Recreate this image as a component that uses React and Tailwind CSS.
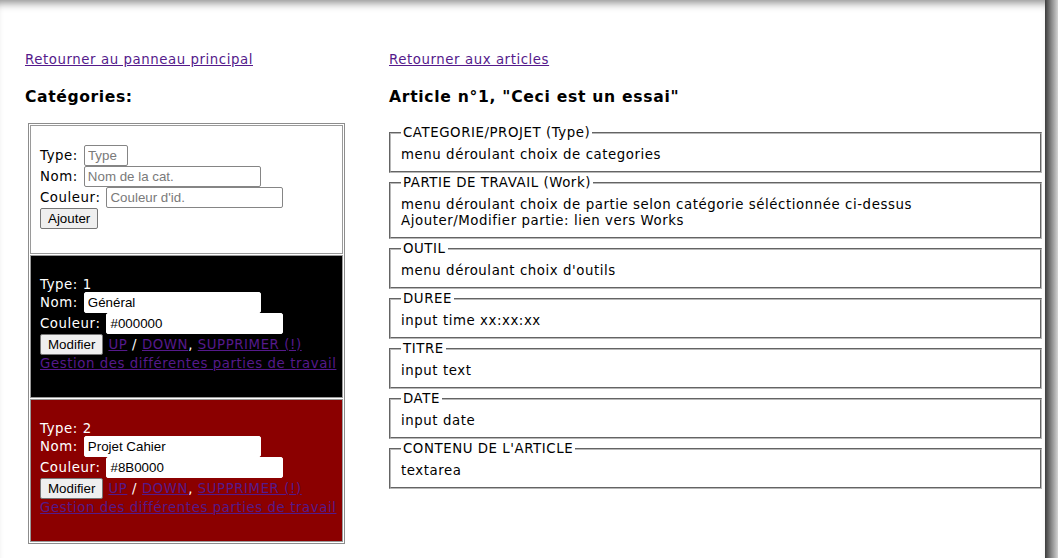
import React from 'react'

const verdana = "font-['DejaVu_Sans',Verdana,sans-serif]"
const arial = "font-['Liberation_Sans',Arial,sans-serif]"

const TextInput = ({ value, placeholder, width = 'w-[177px]', dark = false }) => (
  <input
    type="text"
    defaultValue={value}
    placeholder={placeholder}
    className={`${arial} ${width} h-[21px] px-[3px] text-[13.33px] tracking-normal text-black bg-white border ${dark ? 'border-white' : 'border-[#858585]'} rounded-[2px] placeholder:text-[#7a7a7a] outline-none`}
  />
)

const Button = ({ children }) => (
  <button className={`${arial} h-[21px] px-[7px] text-[13.33px] tracking-normal text-black bg-[#efefef] border border-[#767676] rounded-[2px]`}>
    {children}
  </button>
)

const Link = ({ children }) => (
  <a href="#" className="text-[#551a8b] underline">
    {children}
  </a>
)

const CategoryCell = ({ type, name, color, bg }) => (
  <div className={`border border-[#9a9a9a] ${bg} text-white px-[9px] pt-[21px] pb-[25px]`}>
    <div className="leading-[15px]">Type: {type}</div>
    <div className="flex items-center h-[21px]">
      <span>Nom:</span>
      <span className="ml-[6px]"><TextInput value={name} dark /></span>
    </div>
    <div className="flex items-center h-[21px]">
      <span>Couleur:</span>
      <span className="ml-[6px]"><TextInput value={color} dark /></span>
    </div>
    <div className="flex items-center h-[21px] whitespace-nowrap">
      <Button>Modifier</Button>
      <span className="ml-[5px]">
        <Link>UP</Link> / <Link>DOWN</Link>, <Link>SUPPRIMER (!)</Link>
      </span>
    </div>
    <div className="leading-[17px] whitespace-nowrap">
      <Link>Gestion des différentes parties de travail</Link>
    </div>
  </div>
)

const Field = ({ legend, children }) => (
  <fieldset className="border-2 [border-style:groove] border-[#b8b8b8] px-[10px] pt-[6px] pb-[8px] mb-[2px]">
    <legend className="px-[2px] leading-[16px]">{legend}</legend>
    <div className="leading-[16px]">{children}</div>
  </fieldset>
)

export default function App() {
  return (
    <div className={`${verdana} w-[1058px] h-[558px] flex overflow-hidden bg-white text-[13.33px] tracking-[0.56px] text-black`}>
      <div className="flex-1 flex pl-[25px] pt-[52px] pr-[3px] shadow-[inset_0_9px_8px_-6px_rgba(0,0,0,0.45)]">
        {/* colonne gauche */}
        <div className="w-[364px]">
          <div className="leading-[16px]">
            <Link>Retourner au panneau principal</Link>
          </div>
          <h3 className="font-bold text-[15.6px] tracking-[0.6px] leading-[18px] mt-[20px]">Catégories:</h3>
          <div className="ml-[3px] mt-[17px] w-[317px] border border-[#8c8c8c] p-px flex flex-col gap-px">
            <div className="border border-[#9a9a9a] bg-white px-[9px] pt-[19px] pb-[24px]">
              <div className="flex items-center h-[21px]">
                <span>Type:</span>
                <span className="ml-[6px]"><TextInput placeholder="Type" width="w-[44px]" /></span>
              </div>
              <div className="flex items-center h-[21px]">
                <span>Nom:</span>
                <span className="ml-[6px]"><TextInput placeholder="Nom de la cat." /></span>
              </div>
              <div className="flex items-center h-[21px]">
                <span>Couleur:</span>
                <span className="ml-[6px]"><TextInput placeholder="Couleur d'id." /></span>
              </div>
              <div className="flex items-center h-[21px]">
                <Button>Ajouter</Button>
              </div>
            </div>
            <CategoryCell type="1" name="Général" color="#000000" bg="bg-black" />
            <CategoryCell type="2" name="Projet Cahier" color="#8B0000" bg="bg-[#8b0000]" />
          </div>
        </div>

        {/* colonne droite */}
        <div className="flex-1">
          <div className="leading-[16px]">
            <Link>Retourner aux articles</Link>
          </div>
          <h3 className="font-bold text-[15.6px] tracking-[0.7px] leading-[18px] mt-[20px]">Article n°1, "Ceci est un essai"</h3>
          <div className="mt-[19px]">
            <Field legend="CATEGORIE/PROJET (Type)">menu déroulant choix de categories</Field>
            <Field legend="PARTIE DE TRAVAIL (Work)">
              menu déroulant choix de partie selon catégorie séléctionnée ci-dessus
              <br />
              Ajouter/Modifier partie: lien vers Works
            </Field>
            <Field legend="OUTIL">menu déroulant choix d'outils</Field>
            <Field legend="DUREE">input time xx:xx:xx</Field>
            <Field legend="TITRE">input text</Field>
            <Field legend="DATE">input date</Field>
            <Field legend="CONTENU DE L'ARTICLE">textarea</Field>
          </div>
        </div>
      </div>
      <div className="w-[13px] bg-gradient-to-r from-[#3c3c3c] via-[#8a8a8a] to-[#d4d4d4]" />
    </div>
  )
}
